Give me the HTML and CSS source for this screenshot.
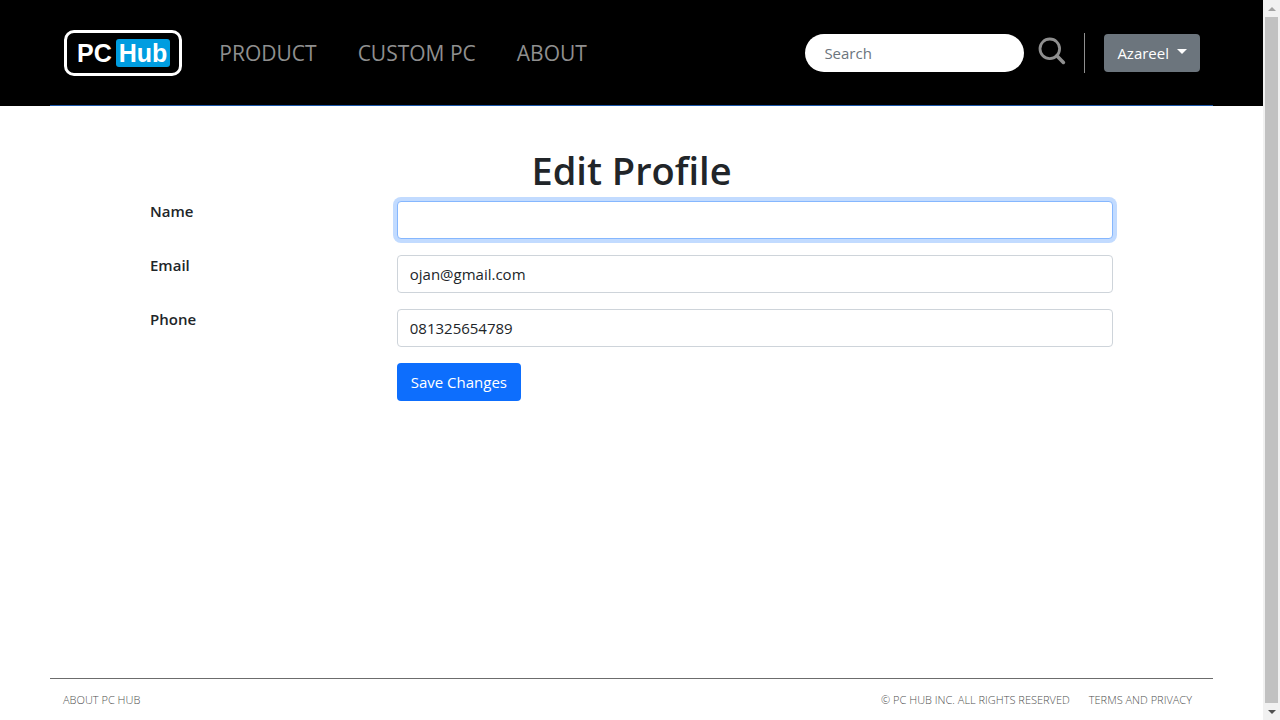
FILE: index.html
```html
<!DOCTYPE html>
<html lang="en">
<head>
<meta charset="utf-8">
<meta name="viewport" content="width=device-width, initial-scale=1">
<title>Edit Profile - PC Hub</title>
<link rel="stylesheet" href="styles.css">
</head>
<body>
<div class="page">
  <header class="header">
    <div class="header-inner">
      <a class="brand" href="#" aria-label="PC Hub"><span class="brand-pc">PC</span><span class="brand-hub">Hub</span></a>
      <nav class="nav">
        <a href="#">PRODUCT</a>
        <a href="#">CUSTOM PC</a>
        <a href="#">ABOUT</a>
      </nav>
      <form class="search">
        <input class="search-input" type="search" placeholder="Search" aria-label="Search">
        <button class="search-button" type="button" aria-label="Submit search">
          <svg width="28" height="28" viewBox="0 0 28 28" fill="none" stroke="#8f8f8f"><circle cx="11.8" cy="11.8" r="9.8" stroke-width="2.8"/><path d="M18.8 18.8L25.4 25.4" stroke-width="3.6" stroke-linecap="round"/></svg>
        </button>
      </form>
      <div class="account">
        <button class="account-button" type="button">Azareel<span class="caret"></span></button>
      </div>
    </div>
  </header>
  <main class="main">
    <h1 class="title">Edit Profile</h1>
    <form class="profile">
      <label class="label" for="name">Name</label>
      <input class="field field-active" id="name" type="text">
      <label class="label" for="email">Email</label>
      <input class="field" id="email" type="email" value="ojan@gmail.com">
      <label class="label" for="phone">Phone</label>
      <input class="field" id="phone" type="tel" value="081325654789">
      <button class="save" type="submit">Save Changes</button>
    </form>
  </main>
  <footer class="footer">
    <a href="#">ABOUT PC HUB</a>
    <span class="copyright">© PC HUB INC. ALL RIGHTS RESERVED</span>
    <a href="#">TERMS AND PRIVACY</a>
  </footer>
</div>
<div class="scrollbar" aria-hidden="true">
  <span class="arrow arrow-up"></span>
  <span class="thumb"></span>
  <span class="arrow arrow-down"></span>
</div>
</body>
</html>
```
FILE: styles.css
```css
* { box-sizing: border-box; }
body {
  display: flex;
  min-height: 100vh;
  margin: 0;
  background: #fff;
  color: #212529;
  font: 15px/24px "Segoe UI", "Open Sans", "Noto Sans", sans-serif;
}
a { color: inherit; text-decoration: none; }
button, input { font: inherit; }
.page { display: flex; flex: 1; flex-direction: column; min-width: 0; }

.header { padding: 0 50px; background: #000; }
.header-inner {
  display: flex;
  align-items: center;
  height: 106px;
  padding: 0 13px 0 14px;
  border-bottom: 1px solid #1b56a8;
}
.brand {
  display: flex;
  align-items: center;
  gap: 4px;
  height: 46px;
  padding: 0 9px 0 10px;
  border: 3px solid #fff;
  border-radius: 10px;
  color: #fff;
  font: bold 25px/28px "Liberation Sans", Arial, sans-serif;
}
.brand-hub { padding: 0 3px; border-radius: 3px; background: #009de0; }
.nav {
  display: flex;
  gap: 41px;
  margin: 0 auto 0 37px;
  color: #8f8f8f;
  font-size: 21px;
  line-height: 32px;
}
.search { display: flex; align-items: center; gap: 14px; }
.search-input {
  width: 219px;
  height: 38px;
  padding: 0 19px;
  border: 0;
  border-radius: 19px;
  background: #fff;
  color: #212529;
}
.search-input::placeholder { color: #6c757d; }
.search-button { display: flex; padding: 0 0 4px; border: 0; background: none; }
.account {
  display: flex;
  align-items: center;
  height: 40px;
  margin-left: 18px;
  padding-left: 19px;
  border-left: 1px solid #8f8f8f;
}
.account-button {
  display: flex;
  align-items: center;
  gap: 8px;
  height: 38px;
  padding: 0 13px;
  border: 0;
  border-radius: 4px;
  background: #6c757d;
  color: #fff;
}
.caret { margin-bottom: 2px; border: 5px solid transparent; border-top-color: #fff; border-bottom: 0; }

.main { flex: 1; width: calc(100% - 300px); margin: 0 auto; padding-top: 40px; }
.title { margin: 0 0 7px; text-align: center; font-size: 38px; line-height: 48px; font-weight: 600; }
.profile {
  display: grid;
  grid-template-columns: repeat(12, 1fr);
  column-gap: 24px;
  row-gap: 16px;
}
.label { grid-column: span 3; line-height: 20px; font-weight: 600; }
.field {
  grid-column: span 9;
  min-width: 0;
  height: 38px;
  padding: 0 12px;
  border: 1px solid #ced4da;
  border-radius: 4px;
  background: #fff;
  color: #212529;
}
.field-active { border-color: #86b7fe; outline: 0; box-shadow: 0 0 0 4px #c2dbff; }
.save {
  grid-column: 4 / -1;
  justify-self: start;
  height: 38px;
  padding: 0 14px;
  border: 0;
  border-radius: 4px;
  background: #0d6efd;
  color: #fff;
}

.footer {
  display: flex;
  gap: 19px;
  margin: 0 50px;
  padding: 13px 21px 12px 13px;
  border-top: 1px solid #6c6c6c;
  color: #505050;
  font-size: 11px;
  line-height: 16px;
  font-weight: 300;
}
.copyright { margin-left: auto; }

.scrollbar {
  position: sticky;
  top: 0;
  display: flex;
  flex-direction: column;
  align-items: center;
  width: 17px;
  height: 100vh;
  background: #f1f1f1;
}
.arrow { display: flex; align-items: center; justify-content: center; height: 17px; }
.arrow::before { content: ""; border: 4px solid transparent; }
.arrow-up::before { border-top: 0; border-bottom-color: #a3a3a3; }
.arrow-down::before { border-bottom: 0; border-top-color: #505050; }
.thumb { flex: 1; width: 13px; background: #c1c1c1; }
```
